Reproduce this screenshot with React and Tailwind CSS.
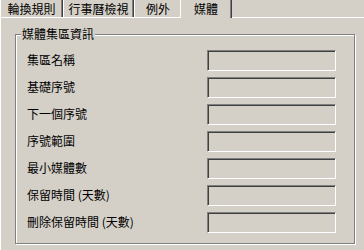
import React from 'react'

const font = { fontFamily: '"Noto Sans CJK TC", "Noto Sans", sans-serif' }

const fields = [
  '集區名稱',
  '基礎序號',
  '下一個序號',
  '序號範圍',
  '最小媒體數',
  '保留時間 (天數)',
  '刪除保留時間 (天數)',
]

function Tab({ label, width }) {
  return (
    <div
      className={`${width} h-[17px] flex items-center justify-center border-l border-l-white border-r border-r-[#404040] shadow-[inset_-1px_0_0_#808080] text-[12px] leading-none text-black`}
    >
      {label}
    </div>
  )
}

export default function App() {
  return (
    <div className="w-[364px] h-[250px] bg-[#d4d0c8] overflow-hidden flex flex-col" style={font}>
      <div className="flex h-[17px] shrink-0">
        <Tab label="輪換規則" width="w-[63px]" />
        <Tab label="行事曆檢視" width="w-[71px]" />
        <Tab label="例外" width="w-[48px]" />
        <div className="relative z-10 -ml-[2px] w-[52px] h-[18px] bg-[#d4d0c8] flex items-center justify-center border-l border-l-white border-r border-r-[#404040] shadow-[inset_-1px_0_0_#808080] text-[12px] leading-none text-black">
          <span className="-mt-[1px]">媒體</span>
        </div>
        <div className="flex-1" />
      </div>

      <div className="flex-1 border-t border-t-white border-l border-l-white pt-[16px] pl-[14px]">
        <div className="relative w-[340px] h-[210px] border border-[#808080] shadow-[inset_1px_1px_0_#fff,1px_1px_0_#fff] pt-[15px] pl-[11px] pr-[18px]">
          <div className="absolute -top-[8px] left-[5px] bg-[#d4d0c8] px-[1px] text-[12px] leading-[14px] text-black">
            媒體集區資訊
          </div>
          <div className="flex flex-col gap-[6px]">
            {fields.map((f) => (
              <div key={f} className="flex items-center h-[21px]">
                <div className="flex-1 text-[12px] leading-none text-black -mt-[2px]">{f}</div>
                <div className="w-[129px] h-[21px] border border-t-[#808080] border-l-[#808080] border-b-white border-r-white shadow-[inset_1px_1px_0_#404040] bg-[#d4d0c8]" />
              </div>
            ))}
          </div>
        </div>
      </div>
    </div>
  )
}
